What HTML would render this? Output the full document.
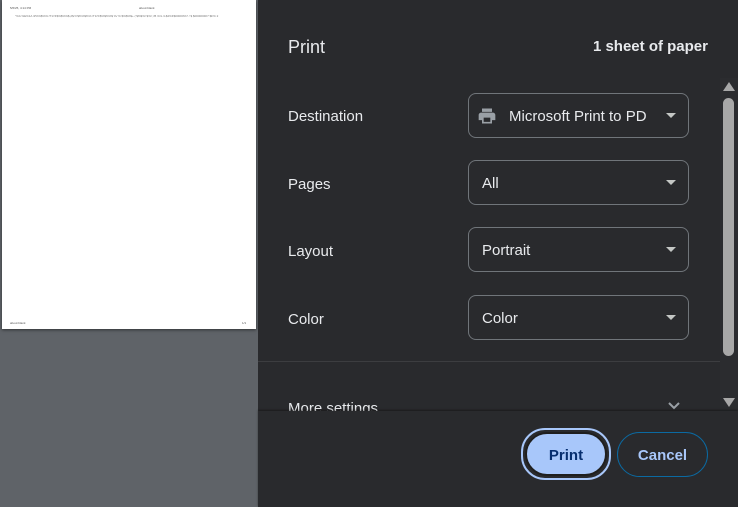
<!DOCTYPE html>
<html><head><meta charset="utf-8"><style>
*{box-sizing:border-box;margin:0;padding:0}
body{width:738px;height:507px;overflow:hidden;background:#5f6368;font-family:"Liberation Sans",sans-serif;position:relative}
.page{position:absolute;left:2px;top:0;width:254px;height:329px;background:#fff;box-shadow:0 1px 3px rgba(0,0,0,.5)}
.t{position:absolute;font-size:3px;color:#555;white-space:nowrap}
.panel{position:absolute;left:258px;top:0;width:480px;height:507px;background:#292a2d}
.h{position:absolute;color:#e8eaed;font-size:17px}
.lbl{position:absolute;left:30px;color:#e8eaed;font-size:15px}
.sel{position:absolute;left:210px;width:221px;height:45px;border:1px solid #70757a;border-radius:8px;color:#e8eaed;font-size:15px;padding-left:13px;line-height:45px}
.sel:after{content:"";position:absolute;right:12px;top:19px;border-left:5px solid transparent;border-right:5px solid transparent;border-top:5px solid #c4c7c5}
.sep{position:absolute;left:0;top:361px;width:462px;height:1px;background:#3c3d40}
.foot{position:absolute;left:0;top:411px;width:480px;height:96px;background:#292a2d;box-shadow:0 -1px 2px rgba(0,0,0,.4)}
.btn{position:absolute;border-radius:24px;font-size:15px;font-weight:bold;text-align:center}
</style></head><body>
<div class="page">
<div class="t" style="left:8px;top:6px">5/6/25, 4:14 PM</div>
<div class="t" style="left:137px;top:6px">about:blank</div>
<div class="t" style="left:13px;top:14px;color:#777">"%A %E%1A /#%%$%%:/T1/!F$%$%%$,2$/ F$%%$%%:/T1/!F$%$%%$ %/ %:$%$%$+ /;$%$%/ $%/ ;/B /C/L /L$2%F$00000%7 / $ $0000000/7 $F% 2</div>
<div class="t" style="left:8px;top:321px">about:blank</div>
<div class="t" style="left:240px;top:321px">1/1</div>
</div>
<div class="panel">
<div class="h" style="left:30px;top:37px;font-size:18px">Print</div>
<div class="h" style="right:30px;top:38px;font-size:15px;font-weight:bold">1 sheet of paper</div>
<div class="lbl" style="top:108px">Destination</div>
<div class="sel" style="top:93px;padding-left:40px"><svg style="position:absolute;left:8px;top:12px" width="20" height="20" viewBox="0 0 24 24"><path fill="#9aa0a6" d="M19 8H5c-1.66 0-3 1.34-3 3v6h4v4h12v-4h4v-6c0-1.66-1.34-3-3-3zm-3 11H8v-5h8v5zM18 3H6v4h12V3z"/></svg>Microsoft Print to PD</div>
<div class="lbl" style="top:176px">Pages</div>
<div class="sel" style="top:160px">All</div>
<div class="lbl" style="top:243px">Layout</div>
<div class="sel" style="top:227px">Portrait</div>
<div class="lbl" style="top:311px">Color</div>
<div class="sel" style="top:295px">Color</div>
<div class="sep"></div>
<div class="lbl" style="top:400px">More settings</div>
<svg style="position:absolute;left:410px;top:402px" width="12" height="8" viewBox="0 0 12 8"><path d="M1 1l5 5 5-5" stroke="#9aa0a6" stroke-width="2" fill="none"/></svg>
<div style="position:absolute;left:462px;top:78px;width:18px;height:333px;background:#2b2c2f"></div>
<div style="position:absolute;left:465px;top:82px;border-left:6px solid transparent;border-right:6px solid transparent;border-bottom:9px solid #a8a8a8"></div>
<div style="position:absolute;left:465px;top:98px;width:11px;height:258px;background:#a8a8a8;border-radius:6px"></div>
<div style="position:absolute;left:465px;top:398px;border-left:6px solid transparent;border-right:6px solid transparent;border-top:9px solid #a8a8a8"></div>
<div class="foot">
<div class="btn" style="left:263px;top:17px;width:90px;height:52px;border:2px solid #a8c7fa;padding:2px"><div style="background:#a8c7fa;border:2px solid #1f1f1f;border-radius:22px;height:44px;line-height:44px;color:#062e6f">Print</div></div>
<div class="btn" style="left:359px;top:21px;width:91px;height:45px;border:1px solid #0b6aa2;line-height:46px;color:#a8c7fa">Cancel</div>
</div>
</div>
</body></html>
